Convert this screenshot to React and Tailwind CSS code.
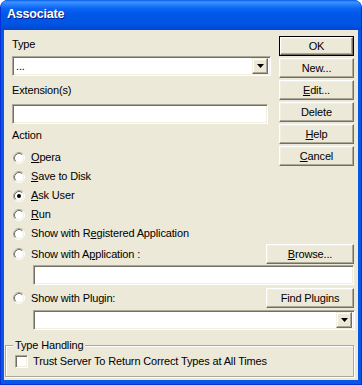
import React, { useState } from 'react';

const font = "font-['Liberation_Sans',Arial,sans-serif]";

function Key({ children }) {
  return <span className="underline decoration-1 underline-offset-[1px]">{children}</span>;
}

function Sunken({ className = '', children }) {
  return (
    <div
      className={`border border-t-[#ACA899] border-l-[#ACA899] border-b-white border-r-white bg-white shadow-[inset_1px_1px_0_#716F64,inset_-1px_-1px_0_#F1EFE2] ${className}`}
    >
      {children}
    </div>
  );
}

function Button({ children, isDefault, className = '' }) {
  const face = (
    <div className="flex h-full w-full items-center justify-center border border-t-white border-l-white border-b-[#716F64] border-r-[#716F64] bg-[#ECE9D8] shadow-[inset_-1px_-1px_0_#ACA899,inset_1px_1px_0_#F1EFE2] text-[11px] leading-none tracking-[-0.15px] text-black">
      {children}
    </div>
  );
  if (isDefault) {
    return <div className={`h-[20px] border border-black ${className}`}>{face}</div>;
  }
  return <div className={`h-[20px] ${className}`}>{face}</div>;
}

function ComboBox({ value, className = '' }) {
  return (
    <Sunken className={`flex h-[20px] items-center p-[2px] ${className}`}>
      <span className="flex-1 pl-px text-[11px] leading-none">{value}</span>
      <div className="flex h-[16px] w-[16px] items-center justify-center border border-t-[#F1EFE2] border-l-[#F1EFE2] border-b-[#716F64] border-r-[#716F64] bg-[#ECE9D8] shadow-[inset_-1px_-1px_0_#ACA899,inset_1px_1px_0_#fff]">
        <svg width="7" height="4" viewBox="0 0 7 4">
          <path d="M0 0h7L3.5 4z" fill="#000" />
        </svg>
      </div>
    </Sunken>
  );
}

function RadioDot({ checked }) {
  return (
    <svg width="12" height="12" viewBox="0 0 12 12" className="shrink-0">
      <circle cx="6" cy="6" r="4.5" fill="#fff" />
      <path d="M2.11 9.89A5.5 5.5 0 0 1 9.89 2.11" fill="none" stroke="#ACA899" />
      <path d="M9.89 2.11A5.5 5.5 0 0 1 2.11 9.89" fill="none" stroke="#fff" />
      <path d="M2.82 9.18A4.5 4.5 0 0 1 9.18 2.82" fill="none" stroke="#716F64" />
      <path d="M9.18 2.82A4.5 4.5 0 0 1 2.82 9.18" fill="none" stroke="#F1EFE2" />
      {checked && <circle cx="6" cy="6" r="2" fill="#000" />}
    </svg>
  );
}

function Radio({ id, selected, onSelect, children, className = '' }) {
  return (
    <div
      onClick={() => onSelect(id)}
      className={`flex h-[19px] cursor-default items-center gap-[6px] pl-px text-[11px] leading-none ${className}`}
    >
      <RadioDot checked={selected === id} />
      <span>{children}</span>
    </div>
  );
}

export default function App() {
  const [action, setAction] = useState('ask');
  const [trust, setTrust] = useState(false);

  return (
    <div className={`${font} h-[385px] w-[362px] select-none`}>
      <div className="flex h-full w-full flex-col overflow-hidden rounded-t-[8px] border border-t-0 border-[#0831D9] bg-[#0855E6]">
        <div className="flex h-[30px] items-center bg-[linear-gradient(to_bottom,#0A5BE8_0%,#3D95FF_7%,#2A84FF_14%,#0C64F2_28%,#0058E8_45%,#0055E4_75%,#004FDC_90%,#0046D0_100%)] pb-[1px] pl-[6px]">
          <span className="text-[12.5px] font-bold tracking-[-0.2px] text-white [text-shadow:1px_1px_0_#0A1883]">Associate</span>
        </div>

        <div className="mx-[3px] mb-[4px] flex flex-1 flex-col bg-[#ECE9D8] pl-[8px] pr-[4px] pt-[6px] tracking-[-0.15px] text-black">
          <div className="flex items-start gap-[8px]">
            <div className="mt-[2px] flex w-[259px] flex-col">
              <div className="h-[13px] text-[11px] leading-[13px]">Type</div>
              <ComboBox value="..." className="mt-[5px] w-[259px]" />
              <div className="mt-[8px] h-[13px] text-[11px] leading-[13px]">Extension(s)</div>
              <Sunken className="mt-[7px] h-[20px] w-[256px]" />
              <div className="mt-[5px] h-[13px] text-[11px] leading-[13px]">Action</div>
              <div className="mt-[6px] flex flex-col">
                <Radio id="opera" selected={action} onSelect={setAction}>
                  <Key>O</Key>pera
                </Radio>
                <Radio id="disk" selected={action} onSelect={setAction}>
                  <Key>S</Key>ave to Disk
                </Radio>
                <Radio id="ask" selected={action} onSelect={setAction}>
                  <Key>A</Key>sk User
                </Radio>
                <Radio id="run" selected={action} onSelect={setAction}>
                  <Key>R</Key>un
                </Radio>
                <Radio id="registered" selected={action} onSelect={setAction}>
                  Show with R<Key>e</Key>gistered Application
                </Radio>
              </div>
            </div>

            <div className="flex w-[75px] flex-col gap-[2px]">
              <Button isDefault>OK</Button>
              <Button>New...</Button>
              <Button>
                <span>
                  <Key>E</Key>dit...
                </span>
              </Button>
              <Button>Delete</Button>
              <Button>
                <span>
                  <Key>H</Key>elp
                </span>
              </Button>
              <Button>
                <span>
                  <Key>C</Key>ancel
                </span>
              </Button>
            </div>
          </div>

          <div className="mt-[1px] flex h-[20px] items-center justify-between">
            <Radio id="application" selected={action} onSelect={setAction}>
              Show with A<Key>p</Key>plication :
            </Radio>
            <Button className="w-[88px]">
              <span>
                <Key>B</Key>rowse...
              </span>
            </Button>
          </div>
          <Sunken className="ml-[21px] mt-[1px] h-[20px]" />

          <div className="mt-[3px] flex h-[20px] items-center justify-between">
            <Radio id="plugin" selected={action} onSelect={setAction}>
              Show with Plugin:
            </Radio>
            <Button className="w-[88px]">Find Plugins</Button>
          </div>
          <ComboBox value="" className="-mr-px ml-[21px] mt-[2px]" />

          <fieldset className="-ml-[7px] mt-[9px] h-[38px] border border-[#ACA899] pl-[7px] shadow-[inset_1px_1px_0_#fff,1px_1px_0_#fff]">
            <legend className="bg-[#ECE9D8] px-[2px] text-[11px] leading-[13px]">Type Handling</legend>
            <div
              onClick={() => setTrust(!trust)}
              className="ml-[2px] mt-[3px] flex cursor-default items-center gap-[5px] text-[11px] leading-none"
            >
              <Sunken className="flex h-[13px] w-[13px] shrink-0 items-center justify-center">
                {trust && (
                  <svg width="7" height="7" viewBox="0 0 7 7">
                    <path d="M0 3l2 2 5-5v2L2 7 0 5z" fill="#000" />
                  </svg>
                )}
              </Sunken>
              <span>Trust Server To Return Correct Types at All Times</span>
            </div>
          </fieldset>
        </div>
      </div>
    </div>
  );
}
